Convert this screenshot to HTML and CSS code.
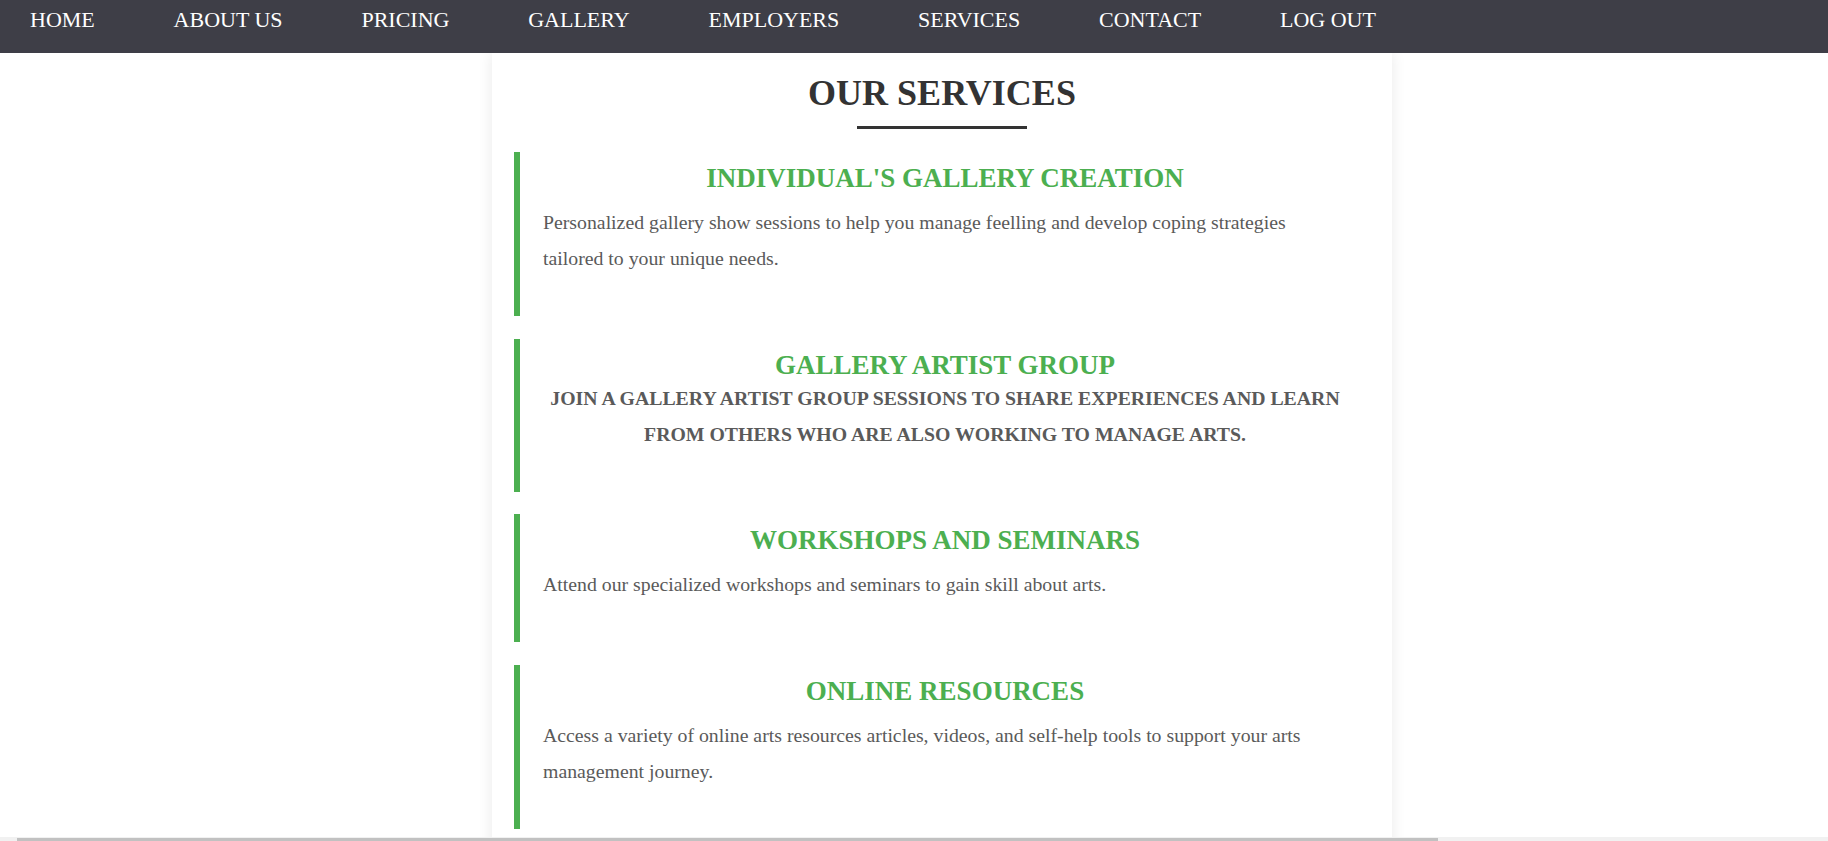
FILE: index.html
```html
<!DOCTYPE html>
<html lang="en">
<head>
<meta charset="utf-8">
<title>Our Services</title>
<link rel="stylesheet" href="styles.css">
</head>
<body>
<nav class="topnav">
  <a href="#">HOME</a>
  <a href="#">ABOUT US</a>
  <a href="#">PRICING</a>
  <a href="#">GALLERY</a>
  <a href="#">EMPLOYERS</a>
  <a href="#">SERVICES</a>
  <a href="#">CONTACT</a>
  <a href="#">LOG OUT</a>
</nav>
<main class="page">
  <section class="card">
    <h2 class="title">OUR SERVICES</h2>
    <div class="title-rule"></div>

    <article class="service">
      <h3>INDIVIDUAL'S GALLERY CREATION</h3>
      <p>Personalized gallery show sessions to help you manage feelling and develop coping strategies tailored to your unique needs.</p>
    </article>

    <article class="service">
      <h3 class="tight">GALLERY ARTIST GROUP</h3>
      <p class="lead">Join a gallery artist group sessions to share experiences and learn from others who are also working to manage arts.</p>
    </article>

    <article class="service">
      <h3>WORKSHOPS AND SEMINARS</h3>
      <p>Attend our specialized workshops and seminars to gain skill about arts.</p>
    </article>

    <article class="service">
      <h3>ONLINE RESOURCES</h3>
      <p>Access a variety of online arts resources articles, videos, and self-help tools to support your arts management journey.</p>
    </article>
  </section>
</main>
<div class="hscroll" aria-hidden="true"><div class="hscroll-thumb"></div></div>
</body>
</html>
```

FILE: styles.css
```css
* {
  box-sizing: border-box;
}

html, body {
  margin: 0;
  padding: 0;
  background: #ffffff;
}

body {
  font-family: "Liberation Serif", "Times New Roman", serif;
  color: #555555;
  overflow: hidden;
}

.topnav {
  position: relative;
  z-index: 2;
  display: flex;
  gap: 78.8px;
  height: 53px;
  padding: 7px 0 0 30px;
  background: #3e3e47;
}

.topnav a {
  color: #ffffff;
  text-decoration: none;
  font-size: 22px;
  line-height: 25px;
  white-space: nowrap;
}

.page {
  display: flex;
  justify-content: center;
  padding-left: 56px;
}

.card {
  width: 900px;
  padding: 20px 22px 40px;
  background: #ffffff;
  box-shadow: 0 0 14px rgba(0, 0, 0, 0.09);
}

.title {
  margin: 0;
  font-size: 36px;
  line-height: 40px;
  font-weight: bold;
  color: #333333;
  text-align: center;
}

.title-rule {
  width: 170px;
  height: 3px;
  margin: 13px auto 23px;
  background: #333333;
}

.service {
  border-left: 6px solid #4caf50;
  padding: 11px 23px 40px;
  margin-bottom: 22.5px;
}

.service h3 {
  margin: 0 0 11px;
  font-size: 27px;
  line-height: 30px;
  font-weight: bold;
  color: #4caf50;
  text-align: center;
}

.service h3.tight {
  margin-bottom: 0;
}

.service p {
  margin: 0;
  font-size: 19.8px;
  line-height: 36px;
  color: #5a5a5a;
}

.service p.lead {
  font-weight: bold;
  text-transform: uppercase;
  text-align: center;
}

.hscroll {
  position: fixed;
  left: 0;
  right: 0;
  bottom: 0;
  height: 4px;
  background: #f1f1f1;
  z-index: 5;
}

.hscroll-thumb {
  position: absolute;
  left: 17px;
  bottom: 0;
  width: 1421px;
  height: 3px;
  background: #c1c1c1;
}
```
